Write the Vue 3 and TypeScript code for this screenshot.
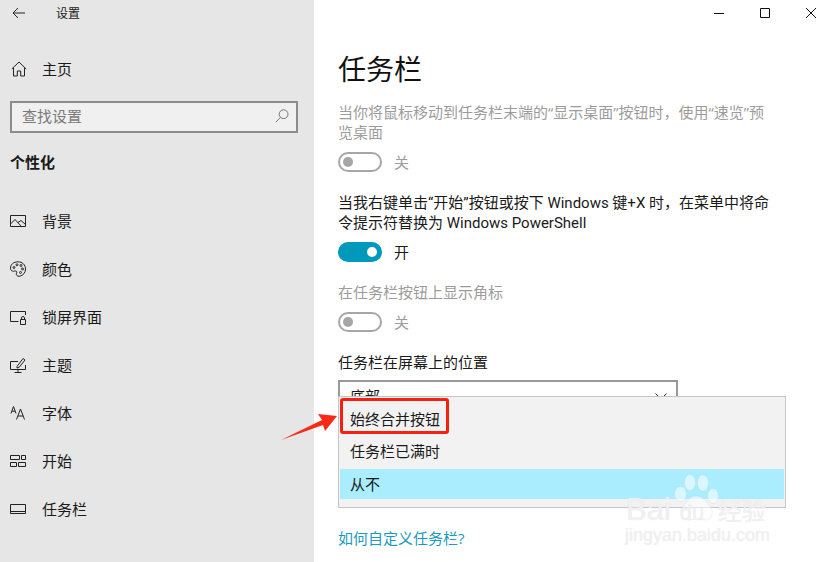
<script setup lang="ts">
const navItems = [
  { label: '背景', icon: 'bg' },
  { label: '颜色', icon: 'color' },
  { label: '锁屏界面', icon: 'lock' },
  { label: '主题', icon: 'theme' },
  { label: '字体', icon: 'font' },
  { label: '开始', icon: 'start' },
  { label: '任务栏', icon: 'bar' },
]
const options = [
  { label: '始终合并按钮', active: false },
  { label: '任务栏已满时', active: false },
  { label: '从不', active: true },
]
</script>

<template>
  <div class="window">
    <aside class="sidebar">
      <div class="head">
        <svg class="back" width="14" height="12" viewBox="0 0 14 12" fill="none" stroke="#222" stroke-width="1">
          <path d="M13 6H1.2M6 1 1 6l5 5" />
        </svg>
        <span class="head-title">设置</span>
      </div>
      <div class="home">
        <svg width="16" height="16" viewBox="0 0 16 16" fill="none" stroke="#222" stroke-width="1">
          <path d="M.8 8 8 1l7.2 7M2.500 7v8h3.800v-5h3.400v5h3.800V7" />
        </svg>
        <span>主页</span>
      </div>
      <div class="search">
        <span>查找设置</span>
        <svg width="14" height="14" viewBox="0 0 14 14" fill="none" stroke="#777" stroke-width="1">
          <circle cx="8.600" cy="5.200" r="4.400" />
          <path d="M5.400 8.400.8 13.200" />
        </svg>
      </div>
      <div class="section">个性化</div>
      <nav class="nav">
        <div v-for="item in navItems" :key="item.label" class="nav-item">
          <svg class="nav-icon" width="16" height="16" viewBox="0 0 16 16" fill="none" stroke="#222" stroke-width="1">
            <template v-if="item.icon === 'bg'">
              <path d="M.5 2.500h15v11H.5zM.5 11 5 6.500l6 6.500M8 9.500l3-2 4.500 4" />
            </template>
            <template v-else-if="item.icon === 'color'">
              <path d="M8 .8C3.500.8.500 3.600.500 7.200c0 2 1.300 3 2.800 3 1.200 0 2.400-.6 3.200.2.800.9-.5 2-.1 3.300.4 1.300 2 1.900 3.800 1.400 3.300-.9 5.300-3.700 5.300-7.100C15.500 3.800 12.300.8 8 .8Z" />
              <circle cx="4" cy="6.500" r="1" /><circle cx="7" cy="3.800" r="1" /><circle cx="11" cy="4.500" r="1" /><circle cx="12.500" cy="8" r="1" /><circle cx="10.500" cy="11.500" r="1" />
            </template>
            <template v-else-if="item.icon === 'lock'">
              <path d="M15.500 6V2.500H.5v10h8" />
              <path d="M10.500 10.500h5v5h-5zM11.500 10.500V9a1.500 1.500 0 0 1 3 0v1.500" />
            </template>
            <template v-else-if="item.icon === 'theme'">
              <path d="M8 4.500H.5v8h15V8M8 12.500v2.500M4.500 15.500h7M7 9.500l6-8 2 1.500-6 7.500-2 .5Z" />
            </template>
            <template v-else-if="item.icon === 'font'">
              <path d="M1 8.500 3.500 1.500 6 8.500M1.900 6.200h3.200M6.500 14.500 10.500 4 14.500 14.500M7.800 11h5.400" />
            </template>
            <template v-else-if="item.icon === 'start'">
              <path d="M.5 2.500h9v4h-9zM11.500 2.500h4v4h-4zM.5 9.500h6v4h-6zM8.500 9.500h7v4h-7z" />
            </template>
            <template v-else>
              <path d="M.5 3.500h15v9H.5zM.5 10.500h15" />
            </template>
          </svg>
          <span>{{ item.label }}</span>
        </div>
      </nav>
    </aside>

    <main class="main">
      <div class="controls">
        <svg width="10" height="10" viewBox="0 0 10 10" fill="none" stroke="#111" stroke-width="1"><path d="M0 5.500h10" /></svg>
        <svg width="10" height="10" viewBox="0 0 10 10" fill="none" stroke="#111" stroke-width="1"><path d="M.5.500h9v9h-9z" /></svg>
        <svg width="10" height="10" viewBox="0 0 10 10" fill="none" stroke="#111" stroke-width="1"><path d="m0 0 10 10M10 0 0 10" /></svg>
      </div>
      <h1 class="title">任务栏</h1>

      <p class="text disabled">当你将鼠标移动到任务栏末端的“显示桌面”按钮时，使用“速览”预览桌面</p>
      <div class="toggle-row disabled">
        <span class="toggle off"><i></i></span><span>关</span>
      </div>

      <p class="text mixed">当我右键单击“开始”按钮或按下 Windows 键+X 时，在菜单中将命令提示符替换为 Windows PowerShell</p>
      <div class="toggle-row">
        <span class="toggle on"><i></i></span><span>开</span>
      </div>

      <p class="text disabled">在任务栏按钮上显示角标</p>
      <div class="toggle-row disabled">
        <span class="toggle off"><i></i></span><span>关</span>
      </div>

      <p class="text">任务栏在屏幕上的位置</p>
      <div class="select">
        <span>底部</span>
        <svg width="12" height="7" viewBox="0 0 12 7" fill="none" stroke="#222" stroke-width="1"><path d="m.5.500 5.500 5.500L11.500.500" /></svg>
      </div>

      <a class="link">如何自定义任务栏?</a>

      <div class="popup">
        <div v-for="o in options" :key="o.label" class="option" :class="{ active: o.active }">{{ o.label }}</div>
      </div>
      <div class="highlight"></div>
    </main>

    <svg class="arrow" width="60" height="30" viewBox="280 412 60 30">
      <path d="M281 440 322 420 318 414 337 416 325 431 323 425Z" fill="#fb2a17" />
    </svg>

    <div class="watermark">
      <svg class="paw" width="46" height="48" viewBox="0 0 46 48" fill="#fff" fill-opacity=".55" stroke="#ccc" stroke-opacity=".3">
        <ellipse cx="6.500" cy="20" rx="6" ry="7.500" />
        <ellipse cx="16" cy="8.500" rx="5.500" ry="8" />
        <ellipse cx="29" cy="9" rx="5.500" ry="8" />
        <ellipse cx="39" cy="22" rx="5.500" ry="7.500" />
        <path d="M22 22c-6 0-8 5-12 9-5 5-3 15 5 15 3 0 5-1 8-1s5 1 8 1c8 0 9-9 5-14-4-4-7-10-14-10Z" />
      </svg>
      <div class="wm-top"><span>Bai</span><span class="wm-du">du</span><span class="wm-cn">经验</span></div>
      <div class="wm-bottom">jingyan.baidu.com</div>
    </div>
  </div>
</template>

<style>
html, body { margin: 0; background: #fff; }
</style>

<style scoped>
.window {
  position: relative;
  width: 816px;
  height: 562px;
  display: flex;
  overflow: hidden;
  background: #fff;
  color: #1a1a1a;
  font-family: "Open Sans", "Noto Sans CJK SC", sans-serif;
  font-size: 15px;
  line-height: 20px;
}
.sidebar { width: 314px; flex: none; background: #e6e6e6; }
.head { height: 26px; display: flex; align-items: center; }
.back { margin-left: 12px; }
.head-title { margin-left: 30px; margin-top: 2px; font-size: 12px; }
.home { margin-top: 19px; height: 48px; display: flex; align-items: center; gap: 15px; padding-left: 11px; }
.search {
  margin: 8px 16px 0 10px;
  height: 32px;
  box-sizing: border-box;
  border: 2px solid #8c8c8c;
  background: #f0f0f0;
  display: flex;
  align-items: center;
  justify-content: space-between;
  padding: 0 7px 2px 10px;
  color: #7a7a7a;
}
.section { margin: 19px 0 0 10px; font-weight: 700; }
.nav { margin-top: 25px; }
.nav-item { height: 48px; display: flex; align-items: center; gap: 16px; padding-left: 10px; }
.nav-icon { flex: none; }

.main { flex: 1; position: relative; padding-left: 24px; min-width: 0; }
.controls { height: 26px; display: flex; justify-content: flex-end; align-items: center; gap: 36px; }
.title { margin: 23px 0 13px; font-size: 28px; line-height: 40px; font-weight: 400; color: #111; }
.text { margin: 0; width: 438px; }
.mixed { font-family: Roboto, "Noto Sans CJK SC", sans-serif; padding-top: 1px; margin-bottom: -1px; }
.disabled { color: #9c9c9c; }
.toggle-row { margin: 10px 0 20px; height: 20px; display: flex; align-items: center; gap: 12px; }
.toggle {
  width: 44px;
  height: 20px;
  box-sizing: border-box;
  border-radius: 10px;
  display: flex;
  align-items: center;
}
.toggle i { display: block; width: 10px; height: 10px; border-radius: 50%; }
.toggle.off { border: 2px solid #a6a6a6; padding-left: 3px; }
.toggle.off i { background: #a6a6a6; }
.toggle.on { background: #0099bc; justify-content: flex-end; padding-right: 5px; }
.toggle.on i { background: #fff; }
.select {
  margin-top: 8px;
  width: 340px;
  height: 32px;
  box-sizing: border-box;
  border: 2px solid #999;
  display: flex;
  align-items: center;
  justify-content: space-between;
  padding: 0 9px 0 10px;
}
.link { display: block; margin-top: 116px; color: #1a9ac0; }

.popup {
  position: absolute;
  left: 24px;
  top: 396px;
  width: 448px;
  height: 112px;
  box-sizing: border-box;
  border: 1px solid #c4c4c4;
  background: #f2f2f2;
  padding: 7px 1px 0;
}
.option { height: 32px; line-height: 30px; padding-left: 10px; }
.option.active { height: 30px; margin-top: 1px; background: #a9edff; }
.highlight {
  position: absolute;
  left: 26px;
  top: 398px;
  width: 109px;
  height: 36px;
  box-sizing: border-box;
  border: 3px solid #f5200f;
  border-radius: 3px;
}
.arrow { position: absolute; left: 280px; top: 412px; }

.watermark {
  position: absolute;
  left: 624px;
  top: 474px;
  width: 150px;
  height: 72px;
  color: rgba(248, 248, 248, .7);
  text-shadow: 0 0 1px #dedede;
}
.paw { position: absolute; left: 50px; top: 0; }
.wm-top {
  position: absolute;
  left: 2px;
  top: 18px;
  display: flex;
  align-items: center;
  font-family: "Liberation Sans", sans-serif;
  font-size: 31px;
  line-height: 30px;
}
.wm-du { margin-left: 9px; margin-top: 6px; font-size: 22px; width: 38px; }
.wm-cn { font-family: "Noto Sans CJK SC", sans-serif; font-size: 24px; }
.wm-bottom {
  position: absolute;
  left: 1px;
  top: 50px;
  font-family: "Liberation Sans", sans-serif;
  font-size: 18px;
  line-height: 22px;
}
</style>
